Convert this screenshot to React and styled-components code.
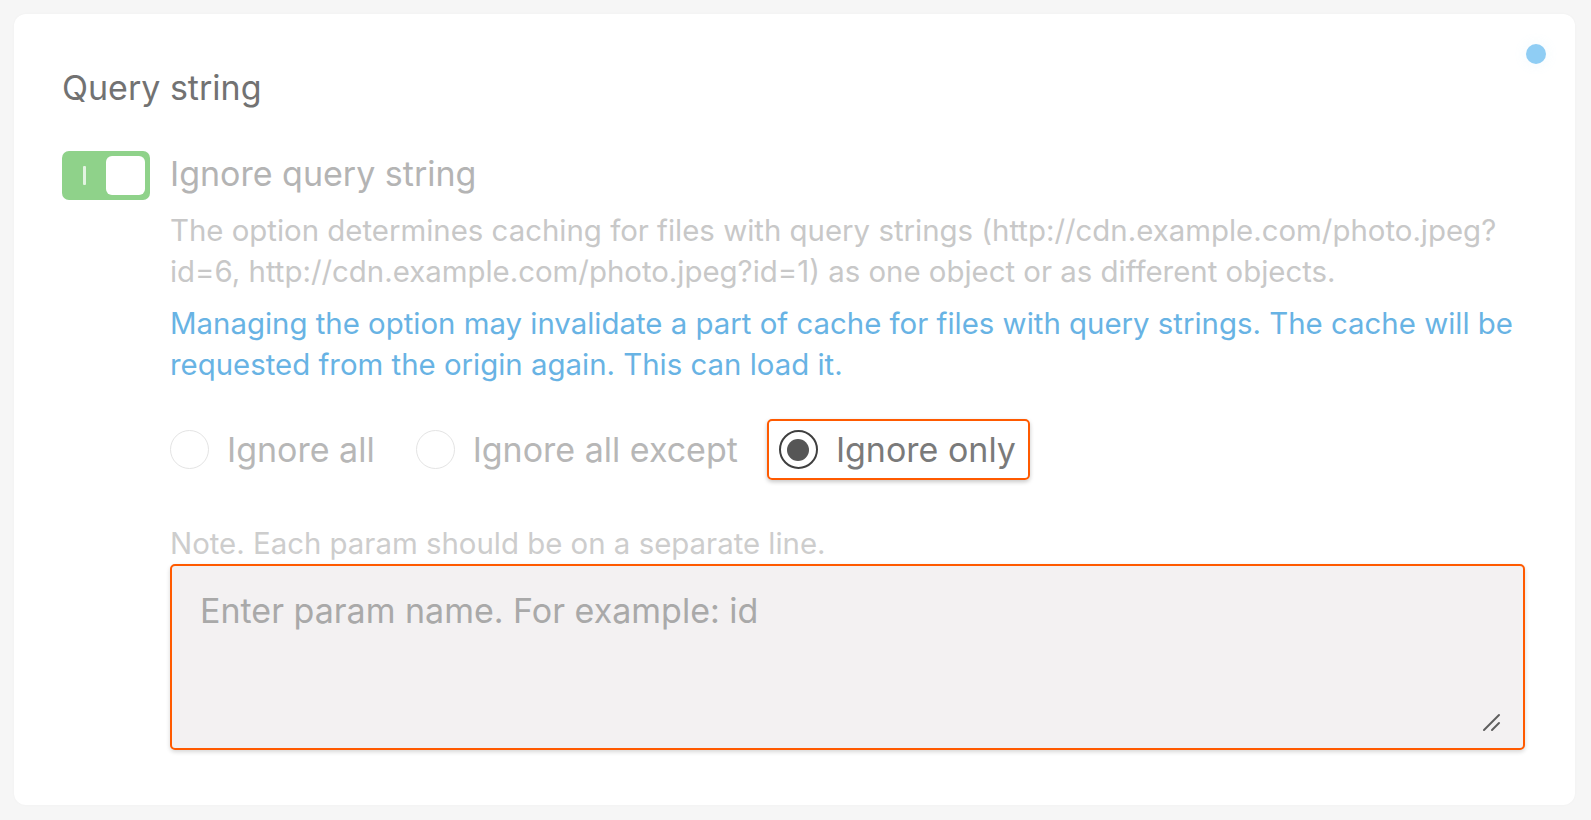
import React from "react";
import styled, { createGlobalStyle } from "styled-components";

const GlobalStyle = createGlobalStyle`
  html, body {
    margin: 0;
    padding: 0;
    background: #f6f6f6;
    font-family: Inter, "Noto Sans", "Liberation Sans", sans-serif;
  }
  * { box-sizing: border-box; }
`;

const Page = styled.div`
  padding: 14px 16px 15px 14px;
`;

const Card = styled.section`
  position: relative;
  background: #ffffff;
  border-radius: 12px;
  padding: 54px 50px 55px 48px;
  box-shadow: 0 0 3px rgba(0, 0, 0, 0.03);
`;

const StatusDot = styled.span`
  position: absolute;
  top: 30px;
  right: 29px;
  width: 20px;
  height: 20px;
  border-radius: 50%;
  background: #8fcdf4;
  box-shadow: 0 0 14px rgba(143, 205, 244, 0.12);
`;

const Title = styled.h2`
  margin: 0 0 43px;
  font-size: 34px;
  line-height: 40px;
  font-weight: 400;
  color: #727272;
`;

const OptionRow = styled.div`
  display: flex;
  align-items: flex-start;
  gap: 20px;
`;

const Toggle = styled.button`
  flex: none;
  width: 88px;
  height: 49px;
  border: 0;
  border-radius: 7px;
  background: #8fd28a;
  padding: 0 5px 0 21px;
  display: flex;
  align-items: center;
  justify-content: space-between;
  cursor: pointer;
`;

const ToggleMark = styled.span`
  width: 3px;
  height: 19px;
  border-radius: 1px;
  background: rgba(255, 255, 255, 0.75);
`;

const ToggleKnob = styled.span`
  width: 39px;
  height: 39px;
  border-radius: 6px;
  background: #ffffff;
`;

const Content = styled.div`
  flex: 1;
  min-width: 0;
  display: flex;
  flex-direction: column;
`;

const OptionLabel = styled.div`
  font-size: 34px;
  line-height: 46px;
  color: #b4b4b4;
`;

const Text = styled.p`
  margin: 0;
  font-size: 29.4px;
  line-height: 41px;
  color: ${(p) => (p.$tone === "info" ? "#68b3e4" : p.$tone === "note" ? "#cdcdcd" : "#c8c8c8")};
`;

const Description = styled(Text)`
  margin-top: 13px;
`;

const Warning = styled(Text)`
  margin-top: 11px;
`;

const RadioGroup = styled.div`
  display: flex;
  align-items: center;
  gap: 41px;
  margin-top: 45px;
`;

const RadioItem = styled.label`
  position: relative;
  display: flex;
  align-items: center;
  gap: 18px;
  font-size: 34px;
  line-height: 39px;
  color: ${(p) => (p.$checked ? "#7a7a7a" : "#b7b7b7")};
  cursor: pointer;

  ${(p) =>
    p.$focused &&
    `
    &::after {
      content: "";
      position: absolute;
      inset: -11px -14px -11px -12px;
      border: 2px solid #ff5a00;
      border-radius: 5px;
      box-shadow: 0 2px 4px rgba(0, 0, 0, 0.22);
      pointer-events: none;
    }
  `}
`;

const RadioCircle = styled.span`
  flex: none;
  width: 39px;
  height: 39px;
  border-radius: 50%;
  border: ${(p) => (p.$checked ? "2px solid #3f3f3f" : "1.5px solid #e4e4e4")};
  display: grid;
  place-items: center;
  background: #fff;

  &::before {
    content: "";
    width: 22px;
    height: 22px;
    border-radius: 50%;
    background: #565656;
    display: ${(p) => (p.$checked ? "block" : "none")};
  }
`;

const Note = styled(Text)`
  margin-top: 54px;
`;

const FieldWrap = styled.div`
  position: relative;
  margin-top: 0;
`;

const TextArea = styled.textarea`
  display: block;
  width: 100%;
  height: 186px;
  border: 2px solid #ff5a00;
  border-radius: 5px;
  background: #f3f1f2;
  padding: 25px 28px 21px;
  font-family: Inter, "Noto Sans", sans-serif;
  font-size: 34px;
  line-height: 40px;
  color: #555;
  resize: none;
  outline: none;
  box-shadow: 0 2px 4px rgba(0, 0, 0, 0.16);

  &::placeholder {
    color: #a9a9a9;
  }
`;

const ResizeGrip = styled.svg`
  position: absolute;
  right: 23px;
  bottom: 18px;
  width: 20px;
  height: 20px;
  pointer-events: none;
`;

const options = [
  { id: "all", label: "Ignore all" },
  { id: "except", label: "Ignore all except" },
  { id: "only", label: "Ignore only" },
];

export default function App() {
  const selected = "only";
  return (
    <Page>
      <GlobalStyle />
      <Card>
        <StatusDot />
        <Title>Query string</Title>
        <OptionRow>
          <Toggle aria-label="Ignore query string">
            <ToggleMark />
            <ToggleKnob />
          </Toggle>
          <Content>
            <OptionLabel>Ignore query string</OptionLabel>
            <Description>
              The option determines caching for files with query strings (http://cdn.example.com/photo.jpeg?
              <br />
              id=6, http://cdn.example.com/photo.jpeg?id=1) as one object or as different objects.
            </Description>
            <Warning $tone="info">
              Managing the option may invalidate a part of cache for files with query strings. The cache will be
              <br />
              requested from the origin again. This can load it.
            </Warning>
            <RadioGroup>
              {options.map((o) => (
                <RadioItem key={o.id} $checked={o.id === selected} $focused={o.id === selected}>
                  <RadioCircle $checked={o.id === selected} />
                  {o.label}
                </RadioItem>
              ))}
            </RadioGroup>
            <Note $tone="note">Note. Each param should be on a separate line.</Note>
            <FieldWrap>
              <TextArea placeholder="Enter param name. For example: id" />
              <ResizeGrip viewBox="0 0 20 20">
                <path d="M2 18 L17 3" stroke="#5e5e5e" strokeWidth="2" strokeLinecap="round" />
                <path d="M10 18 L17 11" stroke="#5e5e5e" strokeWidth="2" strokeLinecap="round" />
              </ResizeGrip>
            </FieldWrap>
          </Content>
        </OptionRow>
      </Card>
    </Page>
  );
}
